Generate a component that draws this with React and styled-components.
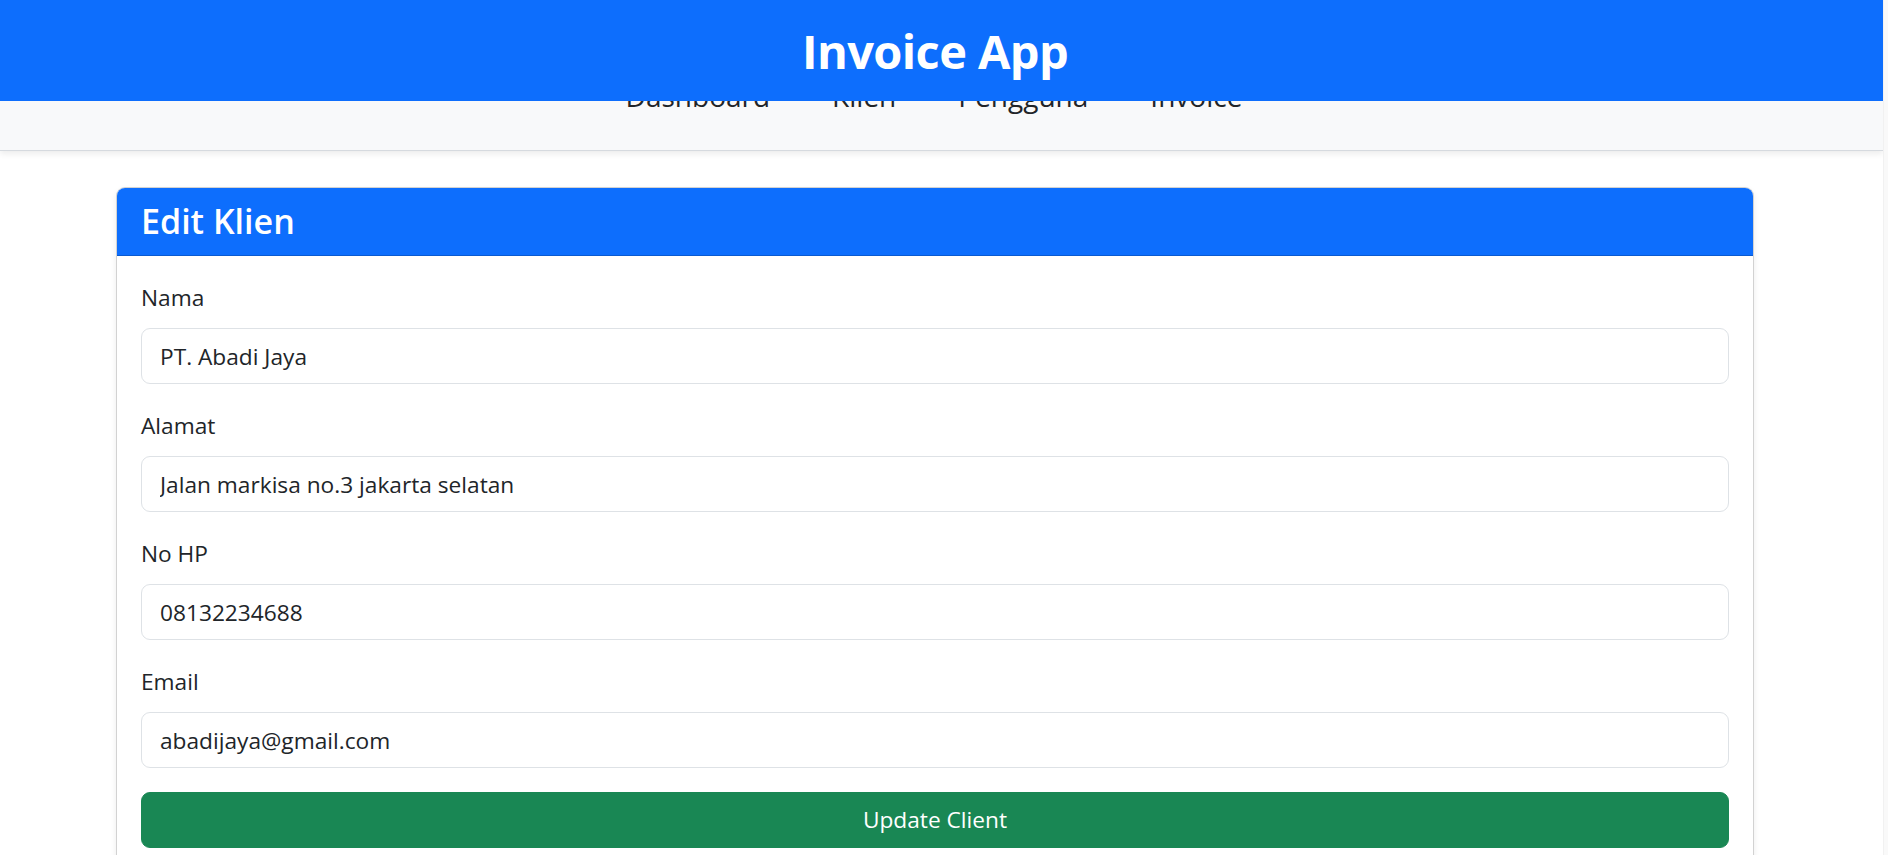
import React from "react";
import styled, { createGlobalStyle } from "styled-components";

const GlobalStyle = createGlobalStyle`
  html, body {
    margin: 0;
    padding: 0;
    height: 100%;
    overflow: hidden;
    background: #ffffff;
  }
  body {
    font-family: "Open Sans", "Noto Sans", sans-serif;
    color: #212529;
  }
  * { box-sizing: border-box; }
`;

const Shell = styled.div`
  display: grid;
  grid-template-columns: 1fr 5px;
  height: 100vh;
  overflow: hidden;
`;

const ScrollTrack = styled.div`
  background: #f9f9f9;
  border-left: 1px solid #f1f1f1;
`;

const Page = styled.div`
  position: relative;
  min-width: 0;
  overflow: hidden;
`;

const TopBar = styled.header`
  position: absolute;
  top: 0;
  left: 0;
  right: 0;
  height: 101px;
  z-index: 10;
  background: #0d6efd;
  display: flex;
  align-items: center;
  justify-content: center;
  padding-right: 13px;
`;

const AppTitle = styled.h1`
  margin: 0;
  color: #ffffff;
  font-size: 47px;
  font-weight: 700;
  letter-spacing: -0.6px;
  line-height: normal;
`;

const NavBar = styled.nav`
  height: 151px;
  background: #f8f9fa;
  border-bottom: 1px solid #d6dadf;
  box-shadow: 0 3px 6px rgba(0, 0, 0, 0.075);
  display: flex;
  align-items: flex-end;
  justify-content: center;
  gap: 62px;
  padding: 0 15px 31px 0;
`;

const NavLink = styled.a`
  font-size: 28px;
  line-height: 45px;
  color: #212529;
  text-decoration: none;
`;

const Main = styled.main`
  padding: 36px 13px 0 0;
`;

const Card = styled.section`
  max-width: 1638px;
  margin: 0 auto;
  background: #ffffff;
  border: 1px solid rgba(0, 0, 0, 0.175);
  border-radius: 9px;
  box-shadow: 0 3px 6px rgba(0, 0, 0, 0.075);
  overflow: hidden;
`;

const CardHeader = styled.div`
  background: #0d6efd;
  border-bottom: 1px solid rgba(0, 0, 0, 0.175);
  padding: 12px 24px;
`;

const CardTitle = styled.h2`
  margin: 0;
  color: #ffffff;
  font-size: 34px;
  font-weight: 600;
  line-height: 43px;
`;

const CardBody = styled.form`
  padding: 24px;
`;

const Field = styled.div`
  margin-bottom: 24px;
`;

const Label = styled.label`
  display: block;
  font-size: 22.7px;
  line-height: 36px;
  margin-bottom: 12px;
  color: #212529;
`;

const Input = styled.input`
  display: block;
  width: 100%;
  height: 56px;
  padding: 9px 18px;
  font-family: inherit;
  font-size: 22.7px;
  line-height: 36px;
  color: #212529;
  background: #ffffff;
  border: 1px solid #dee2e6;
  border-radius: 9px;
  outline: none;
`;

const SubmitButton = styled.button`
  display: block;
  width: 100%;
  height: 56px;
  padding: 9px 18px;
  font-family: inherit;
  font-size: 22.7px;
  line-height: 36px;
  color: #ffffff;
  background: #198754;
  border: 1px solid #198754;
  border-radius: 9px;
  cursor: pointer;
`;

const fields = [
  { id: "nama", label: "Nama", value: "PT. Abadi Jaya", type: "text" },
  { id: "alamat", label: "Alamat", value: "Jalan markisa no.3 jakarta selatan", type: "text" },
  { id: "nohp", label: "No HP", value: "08132234688", type: "text" },
  { id: "email", label: "Email", value: "abadijaya@gmail.com", type: "email" },
];

const links = ["Dashboard", "Klien", "Pengguna", "Invoice"];

export default function App() {
  return (
    <>
      <GlobalStyle />
      <Shell>
        <Page>
          <TopBar>
            <AppTitle>Invoice App</AppTitle>
          </TopBar>
          <NavBar>
            {links.map((l) => (
              <NavLink key={l} href="#">
                {l}
              </NavLink>
            ))}
          </NavBar>
          <Main>
            <Card>
              <CardHeader>
                <CardTitle>Edit Klien</CardTitle>
              </CardHeader>
              <CardBody onSubmit={(e) => e.preventDefault()}>
                {fields.map((f) => (
                  <Field key={f.id}>
                    <Label htmlFor={f.id}>{f.label}</Label>
                    <Input id={f.id} type={f.type} defaultValue={f.value} />
                  </Field>
                ))}
                <SubmitButton type="submit">Update Client</SubmitButton>
              </CardBody>
            </Card>
          </Main>
        </Page>
        <ScrollTrack />
      </Shell>
    </>
  );
}
